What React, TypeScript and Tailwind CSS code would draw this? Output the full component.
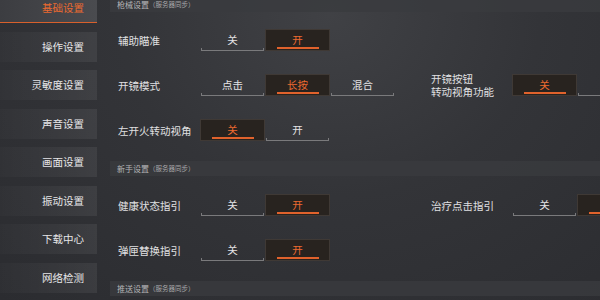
import React from "react";

const FONT = { fontFamily: '"Noto Sans CJK SC", "Noto Sans", sans-serif' };

function Seg({ label, active }: { label: string; active?: boolean }) {
  if (active) {
    return (
      <div className="relative flex h-[22px] w-[65px] items-center justify-center border border-[#3f3935] bg-[#28231f] text-[10.5px] text-[#ec6a30]">
        {label}
        <span className="absolute bottom-[1px] left-1/2 h-[2.5px] w-[42px] -translate-x-1/2 bg-[#e0622c]" />
      </div>
    );
  }
  return (
    <div className="relative flex h-[22px] w-[65px] items-center justify-center text-[10.5px] text-[#e4e4e6]">
      {label}
      <span className="absolute bottom-0 left-[1px] right-[1px] h-[3px] border-x border-b border-[#7a7a7c]" />
    </div>
  );
}

function Group({ opts, active }: { opts: string[]; active: number }) {
  return (
    <div className="flex shrink-0">
      {opts.map((o, i) => (
        <Seg key={i} label={o} active={i === active} />
      ))}
    </div>
  );
}

function Header({ title }: { title: string }) {
  return (
    <div className="flex h-[15px] shrink-0 items-center bg-[#3a3b3f]/80 pl-[7px] text-[8px] text-[#b5b5b7]">
      {title}
      <span className="text-[6.5px] text-[#a8a8aa]">（服务器同步）</span>
    </div>
  );
}

function Label({ children, w }: { children: React.ReactNode; w: string }) {
  return <div className={`${w} shrink-0 text-[10.5px] leading-[13px] text-[#e0e0e2]`}>{children}</div>;
}

const side = ["基础设置", "操作设置", "灵敏度设置", "声音设置", "画面设置", "振动设置", "下载中心", "网络检测"];

export default function App() {
  return (
    <div
      className="flex h-[300px] w-[600px] overflow-hidden bg-[radial-gradient(ellipse_at_55%_5%,#404145_0%,#333438_45%,#2b2c30_100%)]"
      style={FONT}
    >
      <div className="-mt-[7px] flex w-[97px] shrink-0 flex-col gap-[8.5px]">
        {side.map((s, i) =>
          i === 0 ? (
            <div
              key={s}
              className="flex h-[30px] shrink-0 items-center justify-end border-b-[1.5px] border-[#d8602c] bg-[linear-gradient(90deg,#3c3d41,#4a4b4f)] pr-[13px] text-[10.5px] text-[#ec6a30]"
            >
              {s}
            </div>
          ) : (
            <div
              key={s}
              className="flex h-[30px] shrink-0 items-center justify-end bg-[linear-gradient(90deg,rgba(255,255,255,0.015),rgba(255,255,255,0.065))] pr-[13px] text-[10.5px] text-[#e6e6e8]"
            >
              {s}
            </div>
          )
        )}
      </div>
      <div className="ml-[13px] flex flex-1 flex-col">
        <div className="-mt-[3px]">
          <Header title="枪械设置" />
        </div>
        <div className="mt-[5.5px] flex h-[45px] items-center pl-[8px]">
          <Label w="w-[82px]">辅助瞄准</Label>
          <Group opts={["关", "开"]} active={1} />
        </div>
        <div className="flex h-[45px] items-center pl-[8px]">
          <Label w="w-[82px]">开镜模式</Label>
          <div className="w-[231px] shrink-0">
            <Group opts={["点击", "长按", "混合"]} active={1} />
          </div>
          <Label w="w-[81px]">
            开镜按钮
            <br />
            转动视角功能
          </Label>
          <Group opts={["关", "开"]} active={0} />
        </div>
        <div className="flex h-[45px] items-center pl-[8px]">
          <Label w="w-[82px]">左开火转动视角</Label>
          <Group opts={["关", "开"]} active={0} />
        </div>
        <div className="mt-[8.5px]">
          <Header title="新手设置" />
        </div>
        <div className="mt-[6.5px] flex h-[45px] items-center pl-[8px]">
          <Label w="w-[82px]">健康状态指引</Label>
          <div className="w-[231px] shrink-0">
            <Group opts={["关", "开"]} active={1} />
          </div>
          <Label w="w-[81px]">治疗点击指引</Label>
          <Group opts={["关", "开"]} active={1} />
        </div>
        <div className="flex h-[45px] items-center pl-[8px]">
          <Label w="w-[82px]">弹匣替换指引</Label>
          <Group opts={["关", "开"]} active={1} />
        </div>
        <div className="mt-[8.5px]">
          <Header title="推送设置" />
        </div>
      </div>
    </div>
  );
}
